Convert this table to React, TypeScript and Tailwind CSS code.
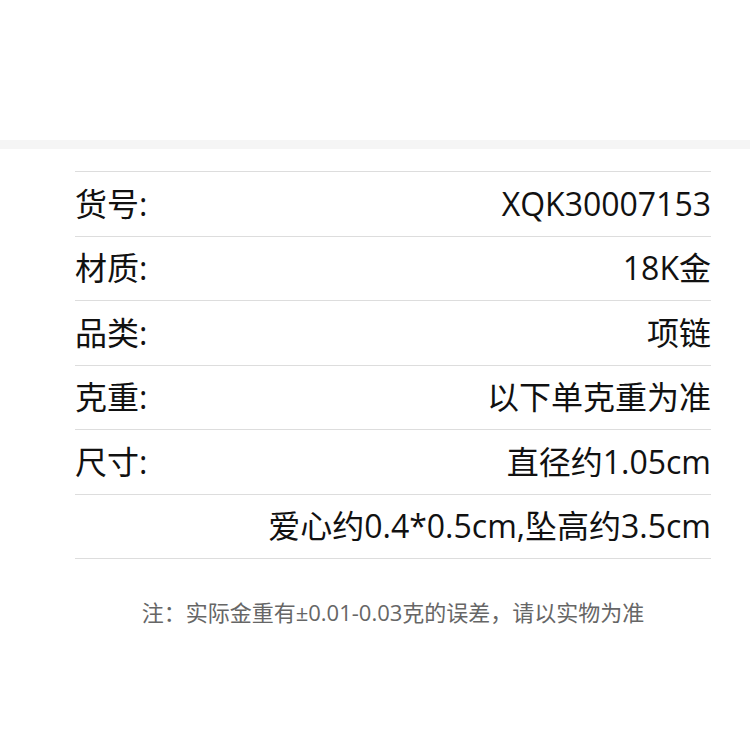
import React from "react"

const ROWS: [string, string][] = [
  ["货号:", "XQK30007153"],
  ["材质:", "18K金"],
  ["品类:", "项链"],
  ["克重:", "以下单克重为准"],
  ["尺寸:", "直径约1.05cm"],
  ["", "爱心约0.4*0.5cm,坠高约3.5cm"],
]

export default function App() {
  return (
    <div className="w-[750px] h-[750px] bg-white font-['Open_Sans','Noto_Sans_CJK_SC',sans-serif] text-[#111]">
      <div className="h-[140px]" />
      <div className="h-[9px] bg-[#f5f5f5]" />
      <div className="pt-[22px] px-[75px] w-[750px]">
        <div className="border-t border-[#ddd] w-[636px]">
          {ROWS.map(([label, value], i) => (
            <div key={i} className="flex items-center justify-between h-[64.5px] border-b border-[#ddd] text-[32px] leading-none">
              <span>{label}</span>
              <span>{value}</span>
            </div>
          ))}
        </div>
        <p className="mt-[37px] w-[636px] text-center text-[22px] text-[#666]">
          注：实际金重有±0.01-0.03克的误差，请以实物为准
        </p>
      </div>
    </div>
  )
}
